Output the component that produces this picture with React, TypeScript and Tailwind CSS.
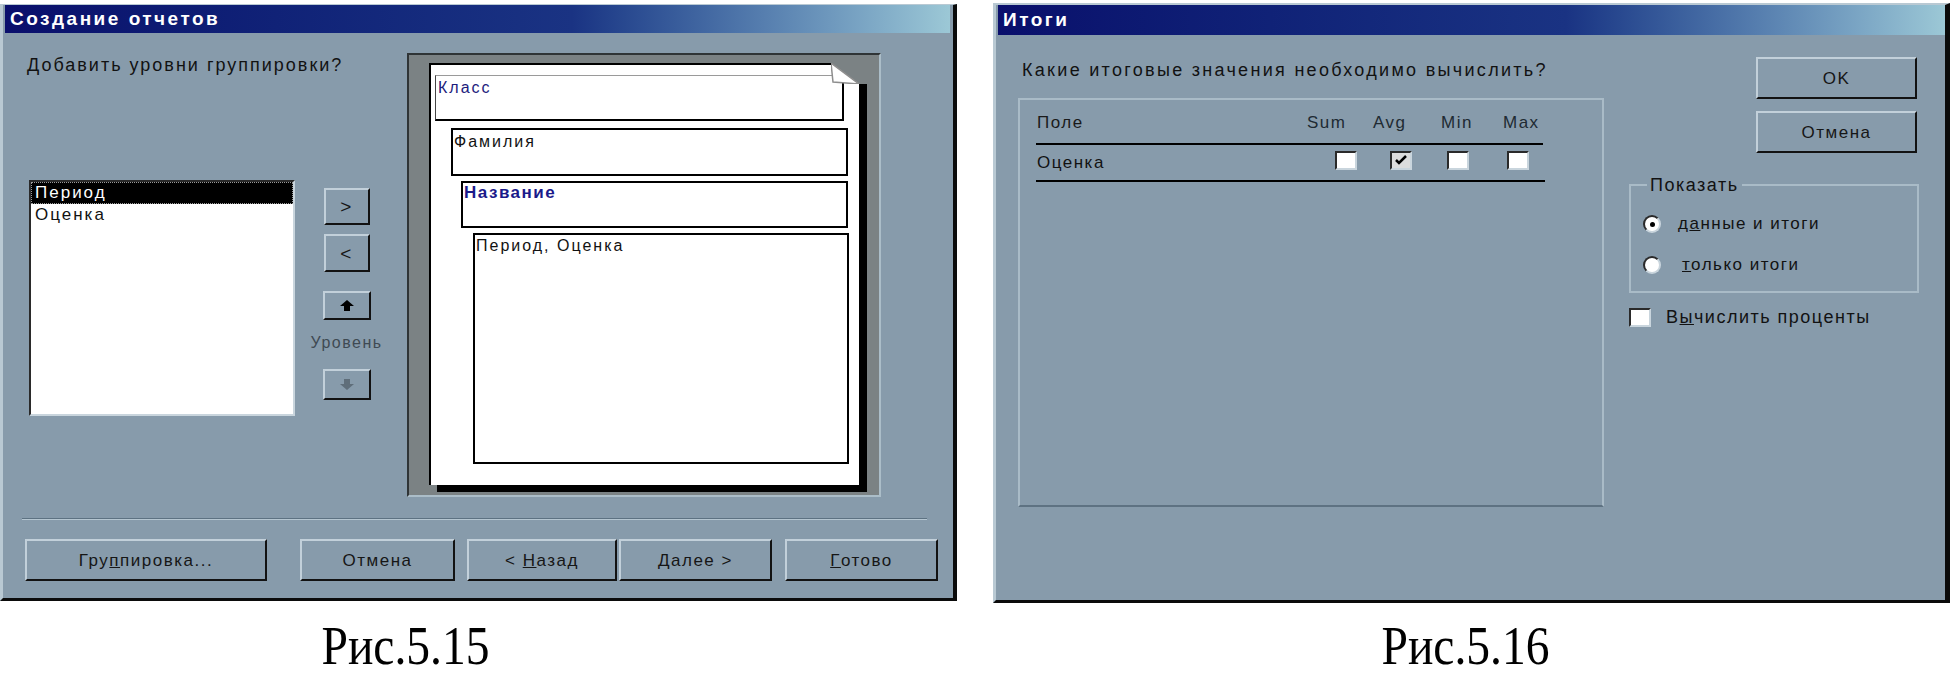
import clsx from 'clsx';
import type { ReactNode } from 'react';

const raised =
  'border-2 border-t-[#c2d0da] border-l-[#c2d0da] border-r-[#121212] border-b-[#121212]';
const sunken =
  'border-2 border-t-[#2a2a2a] border-l-[#2a2a2a] border-r-[#c9d5dd] border-b-[#c9d5dd]';

function Btn({ className, children }: { className?: string; children: ReactNode }) {
  return (
    <div
      className={clsx(
        'flex shrink-0 items-center justify-center whitespace-pre bg-[#879bab] text-[17px] leading-none tracking-[1.5px] text-[#161616]',
        raised,
        className,
      )}
    >
      {children}
    </div>
  );
}

function TitleBar({ title, className }: { title: string; className?: string }) {
  return (
    <div
      className={clsx(
        'flex shrink-0 items-center bg-linear-to-r from-[#0a0f6c] via-[#1a3383] via-60% to-[#9cc8d6] pl-[5px] text-[19px] font-bold tracking-[2.5px] text-white',
        className,
      )}
    >
      {title}
    </div>
  );
}

function Radio({ checked }: { checked?: boolean }) {
  return (
    <span
      className={clsx(
        'flex h-[18px] w-[18px] shrink-0 items-center justify-center rounded-full bg-white',
        sunken,
      )}
    >
      {checked && <span className="h-[5px] w-[5px] rounded-full bg-black" />}
    </span>
  );
}

function Check({ checked }: { checked?: boolean }) {
  return (
    <span
      className={clsx(
        'flex h-[19px] w-[22px] shrink-0 items-center justify-center',
        checked ? 'bg-[#dcdcdc]' : 'bg-white',
        sunken,
      )}
    >
      {checked && (
        <svg width="12" height="10" viewBox="0 0 12 10">
          <path d="M1 5 L4 8 L11 1" stroke="#000" strokeWidth="2.5" fill="none" />
        </svg>
      )}
    </span>
  );
}

function Arrow({ up }: { up?: boolean }) {
  return (
    <svg width="14" height="11" viewBox="0 0 14 11" className={up ? '' : 'rotate-180'}>
      <polygon
        points="7,0 14,6 10,6 10,11 4,11 4,6 0,6"
        fill={up ? '#000' : '#5f6e7a'}
      />
    </svg>
  );
}

function ReportWizard() {
  return (
    <div className="mt-[4px] flex h-[597px] w-[957px] shrink-0 flex-col border-t border-l-[3px] border-r-4 border-b-[3px] border-t-[#b9c9d3] border-l-[#b9c9d3] border-r-[#0b0b0b] border-b-[#0b0b0b] bg-[#879bab] text-[#121212]">
      <TitleBar title="Создание отчетов" className="ml-[2px] mr-[3px] h-[28px]" />

      <div className="flex items-start pt-[20px]">
        <div className="flex w-[404px] shrink-0 flex-col pl-[24px]">
          <div className="mt-[2px] h-[20px] text-[18px] leading-[20px] tracking-[2px]">
            Добавить уровни группировки?
          </div>
          <div className="mt-[105px] flex items-start pl-[2px]">
            <div className={clsx('h-[236px] w-[266px] shrink-0 bg-white', sunken)}>
              <div className="flex h-[22px] items-center border border-dotted border-[#9a9a9a] bg-black pl-[3px] text-[17px] tracking-[2px] text-white">
                Период
              </div>
              <div className="flex h-[22px] items-center pl-[4px] text-[17px] tracking-[2px]">
                Оценка
              </div>
            </div>
            <div className="ml-[27px] mt-[8px] flex w-[49px] shrink-0 flex-col items-center">
              <Btn className="h-[37px] w-[46px] text-[19px]">&gt;</Btn>
              <Btn className="mt-[9px] h-[38px] w-[46px] text-[19px]">&lt;</Btn>
              <Btn className="mt-[19px] h-[29px] w-[48px]">
                <Arrow up />
              </Btn>
              <div className="mt-[13px] h-[20px] whitespace-nowrap text-[16px] leading-[20px] tracking-[1.5px] text-[#3f4a53]">
                Уровень
              </div>
              <Btn className="mt-[16px] h-[31px] w-[48px]">
                <Arrow />
              </Btn>
            </div>
          </div>
        </div>

        <div className="h-[444px] w-[474px] shrink-0 border-2 border-t-[#2f3436] border-l-[#2f3436] border-r-[#abbdc8] border-b-[#abbdc8] bg-[#7b8284] pl-[20px] pt-[8px]">
          <div className="relative flex h-[422px] w-[430px] flex-col items-start border-l-2 border-t-2 border-black bg-white shadow-[8px_7px_0_#000]">
            <svg
              width="36"
              height="21"
              viewBox="0 0 36 21"
              className="absolute right-[-8px] top-[-2px]"
            >
              <polygon points="0,0 36,0 36,21 28,21" fill="#7b8284" />
              <polygon points="0,0 2,19 28,21" fill="#fff" stroke="#8e8e8e" strokeWidth="1.5" />
            </svg>
            <div className="ml-[4px] mt-[10px] h-[46px] w-[409px] border-l border-t border-r-2 border-b-2 border-t-[#9a9a9a] border-l-[#444] border-r-black border-b-black pl-[2px] pt-[2px] text-[16px] leading-[20px] tracking-[2px] text-[#1c1c7c]">
              Класс
            </div>
            <div className="ml-[20px] mt-[7px] h-[48px] w-[397px] border-2 border-black pl-[1px] pt-[2px] text-[16px] leading-[20px] tracking-[2px]">
              Фамилия
            </div>
            <div className="ml-[30px] mt-[5px] h-[47px] w-[387px] border-2 border-black pl-[1px] text-[17px] font-bold leading-[20px] tracking-[1.5px] text-[#1a1a8a]">
              Название
            </div>
            <div className="ml-[42px] mt-[5px] h-[231px] w-[376px] border-2 border-black pl-[1px] pt-[1px] text-[16px] leading-[20px] tracking-[2px]">
              Период, Оценка
            </div>
          </div>
        </div>
      </div>

      <div className="ml-[19px] mt-[21px] h-[2px] w-[905px] border-t border-b border-t-[#5d7282] border-b-[#b5c6d1]" />

      <div className="ml-[22px] mt-[19px] flex">
        <Btn className="h-[42px] w-[242px]">
          Гру<span className="underline">п</span>пировка...
        </Btn>
        <Btn className="ml-[33px] h-[42px] w-[155px]">Отмена</Btn>
        <Btn className="ml-[12px] h-[42px] w-[150px]">
          {'< '}
          <span className="underline">Н</span>азад
        </Btn>
        <Btn className="ml-[2px] h-[42px] w-[153px]">Далее &gt;</Btn>
        <Btn className="ml-[13px] h-[42px] w-[153px]">
          <span className="underline">Г</span>отово
        </Btn>
      </div>
    </div>
  );
}

function Totals() {
  const cols = [
    { name: 'Sum', w: 'w-[66px]' },
    { name: 'Avg', w: 'w-[68px]' },
    { name: 'Min', w: 'w-[62px]' },
    { name: 'Max', w: 'w-[42px]' },
  ];
  return (
    <div className="ml-[36px] mt-[3px] flex h-[600px] w-[957px] shrink-0 flex-col border-t-2 border-l-[3px] border-r-[5px] border-b-[3px] border-t-[#b9c9d3] border-l-[#b9c9d3] border-r-[#0b0b0b] border-b-[#0b0b0b] bg-[#879bab] text-[#121212]">
      <TitleBar title="Итоги" className="ml-[2px] h-[30px]" />

      <div className="flex items-start">
        <div className="flex w-[633px] shrink-0 flex-col pl-[22px]">
          <div className="ml-[4px] mt-[25px] h-[20px] whitespace-nowrap text-[18px] leading-[20px] tracking-[2.3px]">
            Какие итоговые значения необходимо вычислить?
          </div>
          <div className="mt-[18px] h-[409px] w-[586px] border-2 border-t-[#a9bbc7] border-l-[#a9bbc7] border-r-[#a9bbc7] border-b-[#5e7282]">
            <div className="ml-[17px] mt-[13px] flex h-[20px] text-[17px] leading-[20px] tracking-[1.5px]">
              <span className="w-[270px] text-[#1a1a1a]">Поле</span>
              {cols.map((c) => (
                <span key={c.name} className={clsx(c.w, 'text-[#202a32]')}>
                  {c.name}
                </span>
              ))}
            </div>
            <div className="ml-[16px] mt-[10px] h-[2px] w-[507px] bg-black" />
            <div className="ml-[17px] mt-[8px] flex h-[20px] items-center text-[17px] leading-[20px] tracking-[1.5px]">
              <span className="w-[298px]">Оценка</span>
              <div className="-mt-[6px] flex">
                <Check />
                <span className="ml-[33px]">
                  <Check checked />
                </span>
                <span className="ml-[35px]">
                  <Check />
                </span>
                <span className="ml-[38px]">
                  <Check />
                </span>
              </div>
            </div>
            <div className="ml-[16px] mt-[7px] h-[2px] w-[509px] bg-black" />
          </div>
        </div>

        <div className="flex w-[290px] shrink-0 flex-col">
          <Btn className="ml-[127px] mt-[22px] h-[42px] w-[161px]">OK</Btn>
          <Btn className="ml-[127px] mt-[12px] h-[42px] w-[161px]">Отмена</Btn>

          <fieldset className="mt-[22px] h-[118px] w-[290px] border-2 border-[#a9bbc7] text-[17px] leading-[20px] tracking-[1.5px]">
            <legend className="ml-[16px] px-[3px] text-[18px]">Показать</legend>
            <div className="ml-[12px] mt-[19px] flex h-[20px] items-center">
              <Radio checked />
              <span className="ml-[17px]">
                д<span className="underline">а</span>нные и итоги
              </span>
            </div>
            <div className="ml-[12px] mt-[21px] flex h-[20px] items-center">
              <Radio />
              <span className="ml-[21px]">
                <span className="underline">т</span>олько итоги
              </span>
            </div>
          </fieldset>

          <div className="mt-[14px] flex h-[20px] items-center text-[18px] leading-[20px] tracking-[1.5px]">
            <Check />
            <span className="ml-[15px]">
              В<span className="underline">ы</span>числить проценты
            </span>
          </div>
        </div>
      </div>
    </div>
  );
}

export default function App() {
  return (
    <div className="h-[685px] w-[1950px] overflow-hidden bg-white font-['Liberation_Sans',Arial,sans-serif]">
      <div className="flex h-[603px] items-start">
        <ReportWizard />
        <Totals />
      </div>
      <div className="mt-[16px] flex font-['Liberation_Serif','Times_New_Roman',serif] text-[54px] leading-none text-black">
        <div className="flex w-[810px] shrink-0 justify-center">
          <span className="inline-block scale-x-[0.88]">Рис.5.15</span>
        </div>
        <div className="ml-[170px] flex w-[970px] shrink-0 justify-center">
          <span className="inline-block scale-x-[0.88]">Рис.5.16</span>
        </div>
      </div>
    </div>
  );
}
